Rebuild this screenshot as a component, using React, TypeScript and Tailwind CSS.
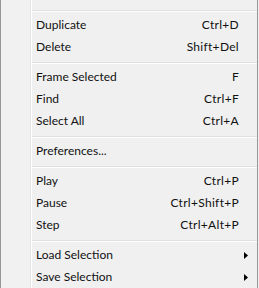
import React from "react";

type Item =
  | { kind: "item"; label: string; shortcut?: string; sub?: boolean }
  | { kind: "sep" };

const items: Item[] = [
  { kind: "sep" },
  { kind: "item", label: "Duplicate", shortcut: "Ctrl+D" },
  { kind: "item", label: "Delete", shortcut: "Shift+Del" },
  { kind: "sep" },
  { kind: "item", label: "Frame Selected", shortcut: "F" },
  { kind: "item", label: "Find", shortcut: "Ctrl+F" },
  { kind: "item", label: "Select All", shortcut: "Ctrl+A" },
  { kind: "sep" },
  { kind: "item", label: "Preferences..." },
  { kind: "sep" },
  { kind: "item", label: "Play", shortcut: "Ctrl+P" },
  { kind: "item", label: "Pause", shortcut: "Ctrl+Shift+P" },
  { kind: "item", label: "Step", shortcut: "Ctrl+Alt+P" },
  { kind: "sep" },
  { kind: "item", label: "Load Selection", sub: true },
  { kind: "item", label: "Save Selection", sub: true },
];

export default function App() {
  return (
    <div
      className="w-[259px] h-[288px] overflow-hidden flex bg-[#f0f0f0] text-[12px] text-[#111]"
      style={{ fontFamily: 'Lato, "Noto Sans", sans-serif' }}
    >
      <div className="w-[1px] bg-[#979797]" />
      <div className="w-[29px] bg-[#f1f1f1]" />
      <div className="w-[1px] bg-[#e2e3e3]" />
      <div className="w-[1px] bg-white" />
      <div className="flex-1 flex flex-col">
        <div className="h-[6px]" />
        {items.map((it, i) =>
          it.kind === "sep" ? (
            <div key={i} className="h-[8px] flex flex-col pt-[4px]">
              <div className="h-[1px] bg-[#e0e0e0]" />
              <div className="h-[1px] bg-white" />
            </div>
          ) : (
            <div key={i} className="h-[22px] flex items-center pl-[4px]">
              <span className="flex-1 whitespace-nowrap">{it.label}</span>
              {it.shortcut && (
                <span className="mr-[18px] whitespace-nowrap tracking-[0.3px]">{it.shortcut}</span>
              )}
              {it.sub && (
                <svg width="4" height="7" viewBox="0 0 4 7" className="mr-[9px]">
                  <path d="M0 0 L4 3.5 L0 7 Z" fill="#000" />
                </svg>
              )}
            </div>
          )
        )}
      </div>
      <div className="w-[1px] bg-[#979797]" />
      <div className="w-[1px] bg-[#f0f0f0]" />
    </div>
  );
}
